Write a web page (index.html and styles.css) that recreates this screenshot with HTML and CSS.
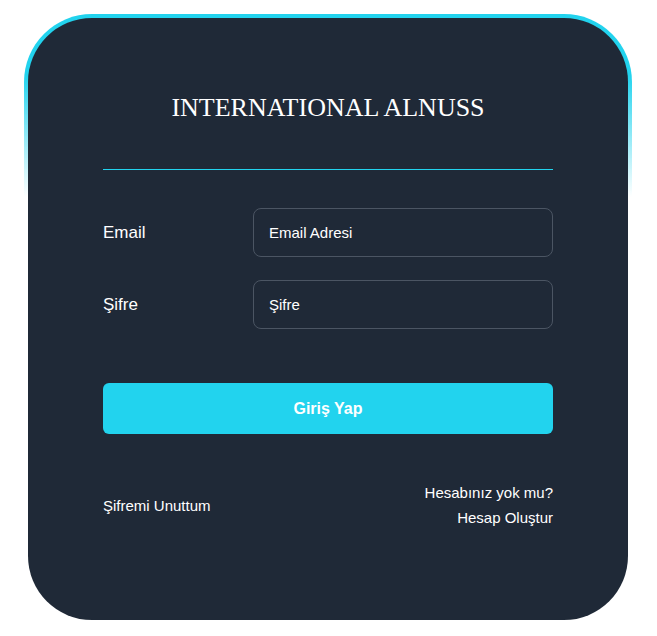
FILE: index.html
```html
<!DOCTYPE html>
<html lang="tr">
<head>
<meta charset="utf-8">
<title>Giriş</title>
<link rel="stylesheet" href="styles.css">
</head>
<body>
<main class="card">
  <h1 class="title">INTERNATIONAL ALNUSS</h1>
  <div class="divider"></div>
  <form class="form">
    <div class="row">
      <label class="label" for="email">Email</label>
      <input class="field" id="email" type="text" placeholder="Email Adresi">
    </div>
    <div class="row">
      <label class="label" for="pass">Şifre</label>
      <input class="field" id="pass" type="password" placeholder="Şifre">
    </div>
    <button class="submit" type="button">Giriş Yap</button>
  </form>
  <div class="footer">
    <a class="link" href="#">Şifremi Unuttum</a>
    <div class="register">
      <span>Hesabınız yok mu?</span>
      <a class="link" href="#">Hesap Oluştur</a>
    </div>
  </div>
</main>
</body>
</html>
```
FILE: styles.css
```css
html, body {
  margin: 0;
  padding: 0;
  background: #ffffff;
}
body {
  padding: 14px 0 0 24px;
  font-family: "Liberation Sans", Arial, sans-serif;
}
.card {
  box-sizing: border-box;
  width: 608px;
  height: 610px;
  border: 4px solid transparent;
  border-radius: 68px;
  background:
    linear-gradient(#1f2937, #1f2937) padding-box,
    linear-gradient(to bottom, #22d3ee 10%, rgba(34, 211, 238, 0) 30%) border-box;
  padding: 75px 75px 0;
  color: #ffffff;
  display: flex;
  flex-direction: column;
}
.title {
  margin: 0;
  font-family: "Liberation Serif", "Times New Roman", serif;
  font-weight: normal;
  font-size: 26px;
  line-height: 30px;
  text-align: center;
}
.divider {
  height: 1px;
  background: #22d3ee;
  margin-top: 46px;
}
.form {
  display: flex;
  flex-direction: column;
  margin-top: 38px;
}
.row {
  display: flex;
  align-items: center;
  margin-bottom: 23px;
}
.row:last-of-type {
  margin-bottom: 54px;
}
.label {
  width: 150px;
  font-size: 17px;
}
.field {
  box-sizing: border-box;
  width: 300px;
  height: 49px;
  border: 1px solid #4b5563;
  border-radius: 8px;
  background: transparent;
  padding: 0 15px;
  color: #ffffff;
  font-family: "Liberation Sans", Arial, sans-serif;
  font-size: 15px;
  outline: none;
}
.field::placeholder {
  color: #ffffff;
  opacity: 1;
}
.submit {
  height: 51px;
  border: none;
  border-radius: 6px;
  background: #22d3ee;
  color: #ffffff;
  font-family: "Liberation Sans", Arial, sans-serif;
  font-weight: bold;
  font-size: 16px;
}
.footer {
  margin-top: 46px;
  display: flex;
  justify-content: space-between;
  align-items: center;
  font-size: 15px;
  line-height: 25px;
}
.register {
  display: flex;
  flex-direction: column;
  align-items: flex-end;
}
.link {
  color: #ffffff;
  text-decoration: none;
}
```
